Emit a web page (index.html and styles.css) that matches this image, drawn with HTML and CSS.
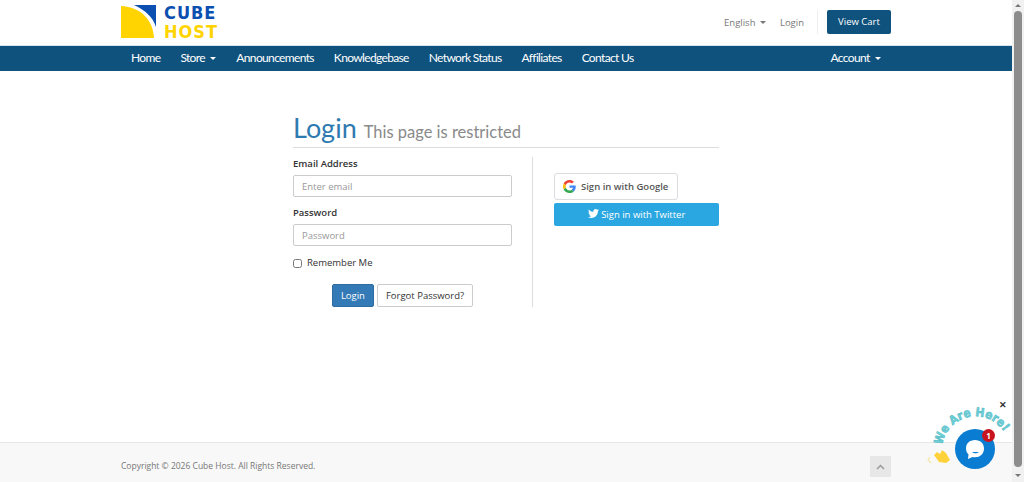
FILE: index.html
```html
<!DOCTYPE html>
<html lang="en">

<head>
    <meta charset="UTF-8">
    <meta name="viewport" content="width=device-width, initial-scale=1.0">
    <title>Login - Cube Host</title>
    <link rel="stylesheet" href="styles.css">
</head>

<body>
    <div class="page">
        <header class="top-bar">
            <div class="container top-inner">
                <a href="#" class="logo">
                    <svg class="logo-mark" width="36" height="35" viewBox="0 0 36 35">
                        <path d="M0 3 C20 4 32 17 33 35 L0 35 Z" fill="#ffd400"/>
                        <path d="M13 2 L35 2 L35 24 C32 14 24 7 13 2 Z" fill="#0b4fb0"/>
                    </svg>
                    <span class="logo-text">
                        <span class="logo-cube">CUBE</span>
                        <span class="logo-host">HOST</span>
                    </span>
                </a>
                <div class="top-links">
                    <a href="#">English <span class="caret"></span></a>
                    <a href="#" class="top-login">Login</a>
                    <span class="top-divider"></span>
                    <a href="#" class="cart-btn">View Cart</a>
                </div>
            </div>
        </header>

        <nav class="main-nav">
            <div class="container nav-inner">
                <ul class="nav-list">
                    <li><a href="#">Home</a></li>
                    <li><a href="#">Store <span class="caret"></span></a></li>
                    <li><a href="#">Announcements</a></li>
                    <li><a href="#">Knowledgebase</a></li>
                    <li><a href="#">Network Status</a></li>
                    <li><a href="#">Affiliates</a></li>
                    <li><a href="#">Contact Us</a></li>
                </ul>
                <ul class="nav-list">
                    <li><a href="#">Account <span class="caret"></span></a></li>
                </ul>
            </div>
        </nav>

        <main class="content">
            <div class="login-box">
                <h1 class="login-title">Login <small>This page is restricted</small></h1>
                <div class="login-cols">
                    <form class="login-form">
                        <label for="email">Email Address</label>
                        <input type="email" id="email" placeholder="Enter email">
                        <label for="password">Password</label>
                        <input type="password" id="password" placeholder="Password">
                        <label class="remember"><input type="checkbox"> Remember Me</label>
                        <div class="form-actions">
                            <button type="button" class="btn btn-primary">Login</button>
                            <button type="button" class="btn">Forgot Password?</button>
                        </div>
                    </form>
                    <div class="social">
                        <button type="button" class="btn-google">
                            <svg width="13" height="13" viewBox="0 0 48 48">
                                <path fill="#EA4335" d="M24 9.500c3.500 0 6.700 1.200 9.200 3.600l6.900-6.900C35.900 2.400 30.500 0 24 0 14.600 0 6.500 5.400 2.600 13.200l8 6.200C12.500 13.700 17.800 9.500 24 9.500z"/>
                                <path fill="#4285F4" d="M47 24.500c0-1.600-.1-3.100-.4-4.500H24v9h12.900c-.6 3-2.200 5.500-4.700 7.200l7.700 6C44.400 38 47 31.800 47 24.500z"/>
                                <path fill="#FBBC05" d="M10.600 28.600c-.5-1.400-.8-3-.8-4.600s.3-3.200.8-4.600l-8-6.200C.9 16.500 0 20.100 0 24s.9 7.500 2.600 10.800l8-6.200z"/>
                                <path fill="#34A853" d="M24 48c6.500 0 11.900-2.100 15.900-5.800l-7.700-6c-2.200 1.500-4.900 2.300-8.200 2.300-6.200 0-11.500-4.200-13.400-9.900l-8 6.200C6.500 42.600 14.600 48 24 48z"/>
                            </svg>
                            <span>Sign in with Google</span>
                        </button>
                        <button type="button" class="btn-twitter">
                            <svg width="11" height="11" viewBox="0 0 24 24">
                                <path fill="#fff" d="M24 4.600c-.9.400-1.800.7-2.800.8 1-.6 1.800-1.600 2.200-2.700-1 .6-2 1-3.100 1.200C19.300 2.800 18 2.200 16.600 2.200c-2.700 0-4.900 2.200-4.900 4.900 0 .4 0 .8.100 1.100C7.700 8 4.100 6 1.700 3c-.4.700-.7 1.600-.7 2.500 0 1.700.9 3.200 2.200 4.100-.8 0-1.600-.2-2.200-.6v.1c0 2.400 1.700 4.400 3.900 4.800-.4.100-.8.200-1.300.2-.3 0-.6 0-.9-.1.600 2 2.400 3.400 4.600 3.400-1.700 1.300-3.800 2.100-6.100 2.100-.4 0-.8 0-1.200-.1 2.200 1.400 4.800 2.200 7.500 2.200 9.100 0 14-7.500 14-14v-.6c1-.7 1.800-1.600 2.500-2.500z"/>
                            </svg>
                            Sign in with Twitter
                        </button>
                    </div>
                </div>
            </div>
        </main>

        <footer class="footer">
            <div class="container footer-inner">
                <p>Copyright &copy; 2026 Cube Host. All Rights Reserved.</p>
                <a href="#" class="back-top">
                    <svg width="9" height="6" viewBox="0 0 9 6"><path d="M1 5 L4.500 1.500 L8 5" fill="none" stroke="#9a9a9a" stroke-width="1.500"/></svg>
                </a>
            </div>
        </footer>
    </div>

    <div class="scrollbar">
        <span class="arrow-up"></span>
        <span class="thumb"></span>
        <span class="arrow-down"></span>
    </div>

    <!-- chat widget -->
    <div class="chat">
        <svg class="chat-label" width="87" height="72" viewBox="0 0 87 72">
            <defs><path id="labelArc" d="M17 56 A32 32 0 0 1 84 50"/></defs>
            <text class="chat-label-text"><textPath href="#labelArc" startOffset="8">We Are Here!</textPath></text>
            <path d="M9 58 L12 55 L15 57 L17 53 L21 56 L25 63 L21 66 L14 65 Z" fill="#ffd23c"/>
            <path d="M5 60 L3 63 L6 66" fill="none" stroke="#f3e6a8" stroke-width="1.200"/>
        </svg>
        <span class="chat-close">&#10005;</span>
        <div class="chat-btn">
            <svg width="20" height="21" viewBox="0 0 20 21">
                <path d="M10 1 C4.500 1 1 4.500 1 9.500 C1 12 2 14 3.500 15.500 L3 20 L7.500 18 C8.500 18.300 9 18.300 10 18.300 C15.500 18.300 19 14.500 19 9.500 C19 4.500 15.500 1 10 1 Z" fill="#fff"/>
                <path d="M7 13 C9 14.800 12 14.800 14 13 Z" fill="#0a7cd1"/>
            </svg>
            <span class="chat-badge">1</span>
        </div>
    </div>
</body>

</html>
```

FILE: styles.css
```css
* {
    box-sizing: border-box;
}

html, body {
    height: 100%;
}

body {
    margin: 0;
    display: flex;
    overflow: hidden;
    font-family: "Open Sans", Arial, sans-serif;
    font-size: 9.500px;
    color: #333;
    background-color: #fff;
}

a {
    text-decoration: none;
    color: inherit;
}

.page {
    flex: 1;
    display: flex;
    flex-direction: column;
    min-width: 0;
}

.container {
    width: 770px;
    margin-left: 121px;
}

.caret {
    display: inline-block;
    width: 0;
    height: 0;
    margin-left: 2px;
    vertical-align: middle;
    border-top: 3px solid;
    border-left: 3px solid transparent;
    border-right: 3px solid transparent;
}

/* header */
.top-bar {
    height: 46px;
    border-bottom: 1px solid #d5e3ec;
}

.top-inner {
    display: flex;
    justify-content: space-between;
    align-items: flex-start;
}

.logo {
    display: flex;
    padding-top: 3px;
}

.logo-mark {
    display: block;
}

.logo-text {
    display: flex;
    flex-direction: column;
    margin-left: 7px;
    font-family: "DejaVu Sans", sans-serif;
    font-stretch: condensed;
    font-weight: bold;
    font-size: 18px;
    line-height: 19px;
    letter-spacing: 1px;
}

.logo-cube {
    color: #0b4fb0;
}

.logo-host {
    color: #ffd400;
}

.top-links {
    display: flex;
    align-items: center;
    padding-top: 10px;
    color: #777;
}

.top-login {
    margin-left: 14px;
}

.top-divider {
    width: 1px;
    height: 24px;
    margin: 0 9px 0 13px;
    background-color: #eee;
}

.cart-btn {
    display: block;
    width: 64px;
    height: 24px;
    line-height: 23px;
    text-align: center;
    color: #fff;
    background-color: #0f527d;
    border-radius: 2px;
}

/* navigation */
.main-nav {
    height: 25px;
    background-color: #0f527d;
}

.nav-inner {
    display: flex;
    justify-content: space-between;
}

.nav-list {
    display: flex;
    margin: 0;
    padding: 0;
    list-style: none;
}

.nav-list a {
    display: block;
    padding: 0 10px;
    font-family: "Lato", sans-serif;
    font-size: 12px;
    line-height: 24px;
    letter-spacing: -0.650px;
    color: #fff;
}

.nav-list .caret {
    margin-left: 3px;
}

/* login */
.content {
    flex: 1;
    display: flex;
    justify-content: center;
    padding-top: 43px;
}

.login-box {
    width: 426px;
}

.login-title {
    margin: 0;
    height: 34px;
    font-family: "Lato", sans-serif;
    font-weight: 400;
    font-size: 27px;
    line-height: 28px;
    color: #2e7ab0;
    border-bottom: 1px solid #ddd;
}

.login-title small {
    font-size: 16.500px;
    color: #8a8a8a;
}

.login-cols {
    display: flex;
    margin-top: 9px;
}

.login-form {
    width: 240px;
    height: 150px;
    padding-right: 20px;
    border-right: 1px solid #ddd;
}

.login-form label {
    display: block;
    font-weight: 600;
    line-height: 13px;
    margin-bottom: 5px;
}

.login-form input[type="email"],
.login-form input[type="password"] {
    display: block;
    width: 219px;
    height: 22px;
    padding: 0 8px;
    margin-bottom: 9px;
    font-family: inherit;
    font-size: 9.500px;
    border: 1px solid #ccc;
    border-radius: 2px;
}

.login-form input::placeholder {
    color: #999;
}

.login-form .remember {
    display: flex;
    align-items: center;
    gap: 5px;
    margin-top: 10px;
    font-weight: 400;
}

.remember input {
    width: 9px;
    height: 9px;
    margin: 1px 0 0;
}

.form-actions {
    display: flex;
    justify-content: center;
    gap: 3px;
    margin-top: 15px;
}

.btn {
    height: 23px;
    padding: 0 8px;
    font-family: inherit;
    font-size: 9.500px;
    color: #333;
    background-color: #fff;
    border: 1px solid #ccc;
    border-radius: 2px;
}

.btn-primary {
    color: #fff;
    background-color: #337ab7;
    border-color: #2e6da4;
}

.social {
    display: flex;
    flex-direction: column;
    align-items: flex-start;
    gap: 3px;
    width: 165px;
    margin-left: 21px;
    padding-top: 16px;
}

.btn-google {
    display: flex;
    align-items: center;
    gap: 5px;
    width: 124px;
    height: 27px;
    padding: 0 8px;
    font-family: inherit;
    font-weight: 600;
    font-size: 9.500px;
    white-space: nowrap;
    color: #555;
    background-color: #fff;
    border: 1px solid #dadce0;
    border-radius: 3px;
}

.btn-twitter {
    width: 165px;
    height: 23px;
    padding: 0;
    font-family: inherit;
    font-size: 9.500px;
    color: #fff;
    background-color: #2aa7e0;
    border: none;
    border-radius: 2px;
}

.btn-twitter svg {
    vertical-align: -1px;
}

/* footer */
.footer {
    height: 40px;
    background-color: #f8f8f8;
    border-top: 1px solid #e7e7e7;
}

.footer-inner {
    display: flex;
    justify-content: space-between;
    align-items: flex-start;
    padding-top: 13px;
}

.footer p {
    margin: 4px 0 0;
    font-size: 8.500px;
    color: #777;
}

.back-top {
    display: flex;
    align-items: center;
    justify-content: center;
    width: 21px;
    height: 21px;
    background-color: #e7e7e7;
}

/* fake scrollbar, the page has no overflow of its own */
.scrollbar {
    width: 12px;
    display: flex;
    flex-direction: column;
    align-items: center;
    background-color: #f1f1f1;
}

.arrow-up, .arrow-down {
    width: 0;
    height: 0;
    border-left: 3px solid transparent;
    border-right: 3px solid transparent;
}

.arrow-up {
    margin-top: 4px;
    border-bottom: 3px solid #777;
}

.arrow-down {
    margin-bottom: 5px;
    border-top: 3px solid #777;
}

.thumb {
    flex: 1;
    width: 8px;
    margin: 4px 0 7px;
    background-color: #8c8c8c;
    border-radius: 4px;
}

/* chat widget */
.chat {
    position: absolute;
    left: 925px;
    top: 397px;
    width: 87px;
    height: 85px;
}

.chat-close {
    position: absolute;
    left: 74px;
    top: 1px;
    font-size: 9px;
    font-weight: bold;
    color: #333;
}

.chat-label {
    position: absolute;
    left: 0;
    top: 0;
}

.chat-label-text {
    font-family: "DejaVu Sans", sans-serif;
    font-stretch: condensed;
    font-weight: bold;
    font-size: 12px;
    fill: #6fd0d8;
    stroke: #4db8c4;
    stroke-width: 0.500px;
}

.chat-btn {
    position: absolute;
    left: 30px;
    top: 32px;
    width: 40px;
    height: 40px;
    display: flex;
    align-items: center;
    justify-content: center;
    background-color: #0a7cd1;
    border-radius: 50%;
}

.chat-badge {
    position: absolute;
    left: 27px;
    top: 0;
    width: 13px;
    height: 13px;
    line-height: 13px;
    text-align: center;
    font-size: 8px;
    font-weight: bold;
    color: #fff;
    background-color: #c8141e;
    border-radius: 50%;
}
```
